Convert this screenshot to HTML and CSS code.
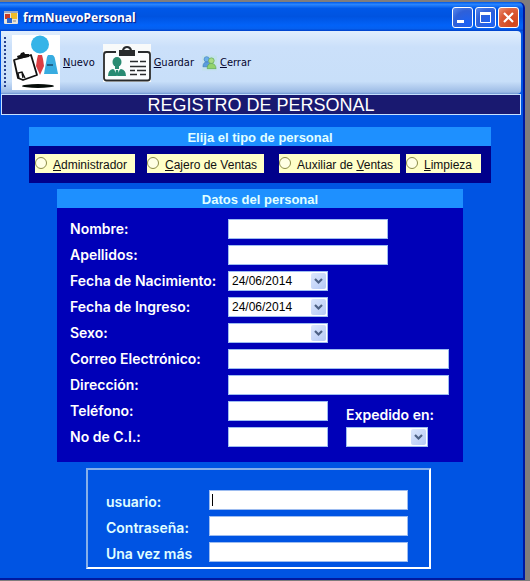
FILE: index.html
```html
<!DOCTYPE html>
<html lang="es">
<head>
<meta charset="utf-8">
<title>frmNuevoPersonal</title>
<link rel="stylesheet" href="styles.css">
</head>
<body>
<svg class="defs" aria-hidden="true">
  <symbol id="chevron" viewBox="0 0 14 14"><path d="M3.5 5 7 8.500 10.500 5" fill="none" stroke="#4d6185" stroke-width="2.200"/></symbol>
</svg>
<main class="window">
  <header class="titlebar">
    <svg class="app-icon" viewBox="0 0 14 13" aria-hidden="true">
      <rect width="14" height="13" rx="1" fill="#e8e4da"/>
      <path d="M0 1h14" stroke="#9aa9c4" stroke-width="2"/>
      <rect x="1" y="3" width="5" height="5" fill="#c83a28"/>
      <rect x="7" y="2" width="6" height="6" fill="#f0bc28"/>
      <rect x="3" y="7" width="5" height="5" fill="#2865d0"/>
      <path d="M9 10h3" stroke="#8a8a80"/>
    </svg>
    <h1 class="title">frmNuevoPersonal</h1>
    <div class="controls">
      <button type="button" class="control" aria-label="Minimizar"><svg viewBox="0 0 19 19"><path d="M4 13.500h7" stroke="#fff" stroke-width="3"/></svg></button>
      <button type="button" class="control" aria-label="Maximizar"><svg viewBox="0 0 19 19"><path d="M4.500 5v9.500h10V5" fill="none" stroke="#fff"/><path d="M4 5.500h11" stroke="#fff" stroke-width="3"/></svg></button>
      <button type="button" class="control close" aria-label="Cerrar ventana"><svg viewBox="0 0 19 19"><path d="m5 5 9 9M14 5l-9 9" stroke="#fff" stroke-width="2.200"/></svg></button>
    </div>
  </header>
  <nav class="toolbar">
    <span class="grip"></span>
    <button type="button" class="tool">
      <svg class="icon-new" viewBox="0 0 48 55" aria-hidden="true">
        <rect width="48" height="55" fill="#fff"/>
        <circle cx="28" cy="9.500" r="9" fill="#35b4e8"/>
        <path d="m26 20h4l1 4 1 7-4 9-4-9 1-7z" fill="#dc3d43"/>
        <path d="M36 20h4q2 0 3 4l3 15H32l3-17z" fill="#38ace0"/>
        <path d="M35 30h6" stroke="#174b6b" stroke-width="1.500"/>
        <path d="m2 25 17-5 6 20-14 5-5-2z" fill="#fff" stroke="#111" stroke-width="1.800" stroke-linejoin="round"/>
        <path d="m6 24-1-3 3-1 1-2 3-1 1 2 4 0 0 3z" fill="#111"/>
        <path d="m7 43-1-5 4-1 3 6M10 38l1 5" fill="none" stroke="#111" stroke-width="1.300"/>
        <ellipse cx="26" cy="51" rx="16" ry="1.900" fill="#050c08"/>
      </svg>
      <span><u>N</u>uevo</span>
    </button>
    <button type="button" class="tool save">
      <svg class="icon-save" viewBox="0 0 48 38" aria-hidden="true">
        <rect width="48" height="38" fill="#f8fafa"/>
        <rect x="1" y="8" width="46" height="28.500" rx="2.500" fill="#fcfdfd" stroke="#292b2c" stroke-width="1.800"/>
        <path d="M13 6h22v6H13z" fill="#f8fafa"/>
        <path d="M16 6h3q1-4 5-4t5 4h3v6H16z" fill="#292b2c"/>
        <path d="M21 6q3-4 6 0z" fill="#f8fafa"/>
        <ellipse cx="14" cy="18" rx="4.500" ry="5" fill="#298b72"/>
        <path d="M12 21h4v4h-4z" fill="#298b72"/>
        <path d="M5 32q0-6 5-7l4 2 4-2q5 1 5 7z" fill="#298b72"/>
        <path d="m11 25 3 7 3-7-3 2z" fill="#fff"/>
        <path d="m13 26h2l1 4-2 2-2-2z" fill="#298b72"/>
        <path d="M27 17.500h8m2 0h6M27 22.500h16M27 26.500h5m2 0h9M27 30.500h7m3 0h6" stroke="#292b2c" stroke-width="1.500"/>
      </svg>
      <span><u>G</u>uardar</span>
    </button>
    <button type="button" class="tool exit">
      <svg class="icon-exit" viewBox="0 0 16 16" aria-hidden="true">
        <rect width="16" height="16" fill="#c3e2ec"/>
        <circle cx="5" cy="4" r="2.800" fill="#6aaeea" stroke="#3876b8" stroke-width=".6"/>
        <path d="M1 12q0-5 4-5t4 5z" fill="#5b9ddd" stroke="#3876b8" stroke-width=".6"/>
        <circle cx="10" cy="5.500" r="3" fill="#a8dc87" stroke="#539e4c" stroke-width=".6"/>
        <path d="M5.500 14q0-5.500 4.500-5.500T15 14z" fill="#92d36e" stroke="#539e4c" stroke-width=".6"/>
      </svg>
      <span><u>C</u>errar</span>
    </button>
  </nav>
  <h2 class="banner">REGISTRO DE PERSONAL</h2>
  <form>
    <section class="group types">
      <h3 class="group-title" id="types-title">Elija el tipo de personal</h3>
      <div class="options" role="radiogroup" aria-labelledby="types-title">
        <label class="option admin"><input type="radio" name="tipo"><span><u>A</u>dministrador</span></label>
        <label class="option cashier"><input type="radio" name="tipo"><span><u>C</u>ajero de Ventas</span></label>
        <label class="option assistant"><input type="radio" name="tipo"><span>Auxiliar de <u>V</u>entas</span></label>
        <label class="option cleaning"><input type="radio" name="tipo"><span><u>L</u>impieza</span></label>
      </div>
    </section>
    <section class="group data">
      <h3 class="group-title">Datos del personal</h3>
      <div class="fields">
        <label for="nombre">Nombre:</label><input class="box medium" id="nombre" type="text">
        <label for="apellidos">Apellidos:</label><input class="box medium" id="apellidos" type="text">
        <label for="nacimiento">Fecha de Nacimiento:</label>
        <div class="combo"><input class="box" id="nacimiento" type="text" value="24/06/2014"><button type="button" class="arrow" aria-label="Elegir fecha de nacimiento"><svg><use href="#chevron"/></svg></button></div>
        <label for="ingreso">Fecha de Ingreso:</label>
        <div class="combo"><input class="box" id="ingreso" type="text" value="24/06/2014"><button type="button" class="arrow" aria-label="Elegir fecha de ingreso"><svg><use href="#chevron"/></svg></button></div>
        <label for="sexo">Sexo:</label>
        <div class="combo"><select class="box" id="sexo"><option></option></select><span class="arrow"><svg><use href="#chevron"/></svg></span></div>
        <label for="correo">Correo Electrónico:</label><input class="box wide" id="correo" type="email">
        <label for="direccion">Dirección:</label><input class="box wide" id="direccion" type="text">
        <label for="telefono">Teléfono:</label><input class="box" id="telefono" type="tel">
        <label for="ci">No de C.I.:</label><input class="box" id="ci" type="text">
        <div class="issued">
          <label for="expedido">Expedido en:</label>
          <div class="combo"><select class="box" id="expedido"><option></option></select><span class="arrow"><svg><use href="#chevron"/></svg></span></div>
        </div>
      </div>
    </section>
    <section class="account">
      <label for="usuario">usuario:</label><input class="box" id="usuario" type="text" autofocus>
      <label for="clave">Contraseña:</label><input class="box" id="clave" type="password">
      <label for="clave2">Una vez más</label><input class="box" id="clave2" type="password">
    </section>
  </form>
</main>
</body>
</html>
```
FILE: styles.css
```css
* { box-sizing: border-box; }
body {
  margin: 0;
  min-height: 100vh;
  padding: 2px 5px 1px 0;
  background: #807d7d;
  font-family: "Liberation Sans", sans-serif;
}
h1, h2, h3 { margin: 0; }
button, input, select { margin: 0; font: inherit; }
.defs { display: none; }

.window {
  min-height: calc(100vh - 3px);
  padding: 0 2px 8px 1px;
  border-bottom: 2px solid #0019a0;
  border-right: 2px solid #0019a0;
  border-radius: 0 6px 0 0;
  background: #0054e3;
}
.titlebar {
  display: flex;
  align-items: center;
  height: 29px;
  margin: 0 -2px 0 -1px;
  padding: 2px 4px 0 4px;
  border-radius: 0 6px 0 0;
  background: linear-gradient(#0058e6, #2a86ff 8%, #0058e8 22%, #0053e0 50%, #0262f8 80%, #0560f0 92%, #0040c8);
}
.app-icon { width: 14px; height: 13px; margin-right: 5px; }
.title {
  flex: 1;
  color: #fff;
  font: bold 12px "Noto Sans", sans-serif;
  text-shadow: 1px 1px 1px #0a1883;
}
.controls { display: flex; gap: 2px; }
.control {
  width: 21px;
  height: 21px;
  padding: 0;
  border: 1px solid #fff;
  border-radius: 3px;
  background: radial-gradient(circle at 75% 80%, #1b62f5, #2f60d8 60%, #5c8bee);
}
.control svg { display: block; width: 19px; height: 19px; }
.close { background: radial-gradient(circle at 75% 80%, #d2451a, #da5a36 60%, #eb9377); }

.toolbar {
  display: flex;
  align-items: center;
  height: 63px;
  padding-left: 3px;
  border-radius: 0 4px 4px 0;
  background: linear-gradient(#e1eefd, #cbe0fa 25%, #c8dff9 80%, #9dbbe5 97%, #6c94d2);
}
.grip {
  width: 2px;
  height: 52px;
  margin-right: 6px;
  background: repeating-linear-gradient(#27418e 0 2px, transparent 2px 4px);
}
.tool {
  display: flex;
  align-items: center;
  gap: 3px;
  padding: 0;
  border: 0;
  background: none;
  color: #05052d;
  font: 11px "DejaVu Sans Condensed", "DejaVu Sans", sans-serif;
}
.tool svg { flex: none; }
.save { margin-left: 8px; }
.exit { margin-left: 8px; }
.icon-new { width: 48px; height: 55px; }
.icon-save { width: 48px; height: 38px; }
.icon-exit { width: 15px; height: 16px; }

.banner {
  height: 21px;
  border: 1px solid #c8e2ff;
  background: #191970;
  color: #fff;
  font-size: 18px;
  font-weight: normal;
  line-height: 20px;
  text-align: center;
}
.group-title {
  height: 19px;
  background: #1e90ff;
  color: #e0ffff;
  font-size: 13px;
  line-height: 21px;
  text-align: center;
}
.types { margin: 12px 30px 6px 28px; background: #00008b; }
.options { display: flex; padding: 8px 10px 10px 6px; }
.option {
  display: flex;
  align-items: center;
  height: 19px;
  background: #ffffc8;
  color: #111;
  font-size: 12px;
}
.option span { margin-top: 3px; white-space: nowrap; }
.option input {
  appearance: none;
  flex: none;
  width: 12px;
  height: 12px;
  margin: 0 6px 2px 0;
  border: 1px solid #8c8c48;
  border-radius: 50%;
  background: #ffffe4;
}
.admin { flex: 0 1 100px; }
.cashier { flex: 0 1 117px; margin-left: 12px; }
.assistant { flex: 0 1 121px; margin-left: 15px; }
.cleaning { flex: 0 1 75px; margin-left: 6px; }

.data { margin: 0 58px 6px 56px; background: #0000b8; }
.fields {
  display: grid;
  grid-template-columns: 158px 100px 60px 1fr;
  grid-auto-rows: 20px;
  gap: 6px 0;
  padding: 11px 14px 15px 13px;
}
.fields label, .account label {
  color: #fff;
  font: 600 14px/20px Inter, sans-serif;
  white-space: nowrap;
}
.fields > label { grid-column: 1; }
.fields > .box, .fields > .combo { grid-column: 2; }
.fields > .medium { grid-column: 2 / 4; }
.fields > .wide { grid-column: 2 / 5; }
.box {
  display: block;
  width: 100%;
  height: 20px;
  padding: 0 3px;
  border: 1px solid #9dbcf0;
  border-radius: 0;
  outline: 0;
  background: #fff;
  color: #000;
  font-size: 12px;
  appearance: none;
}
.combo { position: relative; }
.arrow {
  position: absolute;
  top: 2px;
  right: 2px;
  width: 15px;
  height: 16px;
  padding: 1px 0;
  border: 0;
  border-radius: 2px;
  background: linear-gradient(135deg, #dce7fd, #b5c9f5);
  pointer-events: none;
}
button.arrow { pointer-events: auto; }
.arrow svg { display: block; width: 15px; height: 14px; }
.issued {
  grid-column: 3 / 5;
  grid-row: 8 / 10;
  padding: 4px 21px 0 18px;
}
.issued .combo { margin-top: 2px; }

.account {
  display: grid;
  grid-template-columns: 103px 1fr;
  grid-auto-rows: 20px;
  gap: 6px 0;
  margin: 0 90px 0 85px;
  padding: 20px 21px 5px 18px;
  border: 2px solid #fff;
  border-top-color: #86afea;
  border-left-color: #86afea;
}
.account label { color: #e0ffff; padding-top: 2px; }
#usuario { caret-color: transparent; }
#usuario:focus {
  background: linear-gradient(#000, #000) 2px 3px / 1px 12px no-repeat #fff;
}
```
